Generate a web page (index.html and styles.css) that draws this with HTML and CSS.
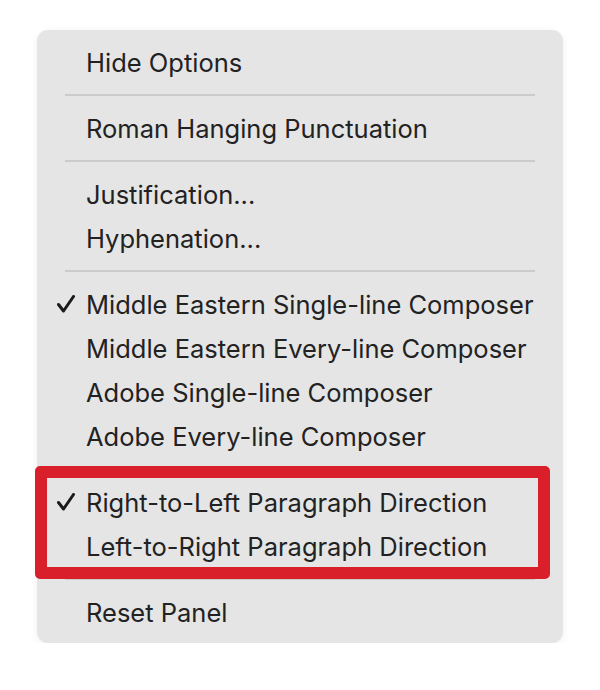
FILE: index.html
```html
<!DOCTYPE html>
<html>
<head>
<meta charset="utf-8">
<link rel="stylesheet" href="styles.css">
</head>
<body>
<div class="menu">
  <div class="item">Hide Options</div>
  <div class="sep"></div>
  <div class="item">Roman Hanging Punctuation</div>
  <div class="sep"></div>
  <div class="item">Justification...</div>
  <div class="item">Hyphenation...</div>
  <div class="sep"></div>
  <div class="item checked"><svg class="check" viewBox="0 0 18 18"><path d="M1.5 9.5 L6.5 16 L16.5 1.5"/></svg>Middle Eastern Single-line Composer</div>
  <div class="item">Middle Eastern Every-line Composer</div>
  <div class="item">Adobe Single-line Composer</div>
  <div class="item">Adobe Every-line Composer</div>
  <div class="sep"></div>
  <div class="highlight">
    <div class="item checked"><svg class="check" viewBox="0 0 18 18"><path d="M1.5 9.5 L6.5 16 L16.5 1.5"/></svg>Right-to-Left Paragraph Direction</div>
    <div class="item">Left-to-Right Paragraph Direction</div>
  </div>
  <div class="sep"></div>
  <div class="item">Reset Panel</div>
</div>
</body>
</html>
```
FILE: styles.css
```css
html, body {
  margin: 0;
  padding: 0;
  background: #ffffff;
}
body {
  padding: 30px 0 0 37px;
  font-family: Inter, "Liberation Sans", sans-serif;
}
.menu {
  width: 526px;
  box-sizing: border-box;
  background: #e5e5e5;
  border-radius: 11px;
  padding: 10px 0 9px 0;
  box-shadow: 0 2px 8px rgba(0,0,0,0.06);
  position: relative;
}
.item {
  height: 44px;
  line-height: 46px;
  padding-left: 49px;
  font-size: 25.5px;
  color: #222222;
  position: relative;
  white-space: nowrap;
}
.check {
  position: absolute;
  left: 20px;
  top: 13px;
  width: 18px;
  height: 18px;
  fill: none;
  stroke: #1a1a1a;
  stroke-width: 3;
  stroke-linecap: round;
  stroke-linejoin: round;
}
.sep {
  height: 22px;
  display: flex;
  align-items: center;
  padding: 0 28px;
}
.sep::before {
  content: "";
  flex: 1;
  height: 2px;
  background: #cbcbcb;
}
.highlight {
  position: relative;
}
.highlight::after {
  content: "";
  position: absolute;
  left: -2px;
  top: -14px;
  width: 515px;
  height: 113px;
  box-sizing: border-box;
  border: 12px solid #d9202a;
  border-radius: 5px;
}
```
